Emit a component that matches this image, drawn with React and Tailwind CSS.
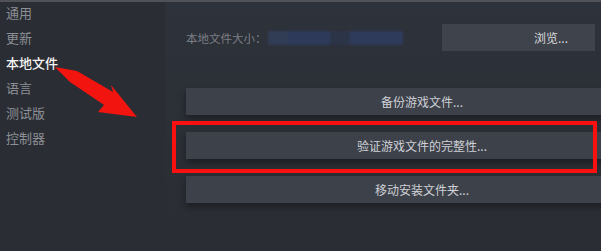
import React from "react";

const font = { fontFamily: '"Noto Sans CJK SC", "Noto Sans", sans-serif' };

const navItems = ["通用", "更新", "本地文件", "语言", "测试版", "控制器"];

function ActionButton({ children }) {
  return (
    <div className="w-[472px] h-[27px] shrink-0 bg-[#3d414a] flex items-center justify-center text-[12px] leading-none text-[#cfd1d6] shadow-[0_4px_7px_rgba(0,0,0,0.35)]">
      {children}
    </div>
  );
}

export default function App() {
  return (
    <div
      className="relative w-[601px] h-[251px] overflow-hidden bg-[#2a2d33] flex border-t-2 border-[#505257]"
      style={font}
    >
      <div className="w-[165px] shrink-0 flex flex-col bg-[#2a2d33] mt-[-2px]">
        {navItems.map((t, i) => (
          <div
            key={t}
            className={
              "h-[25px] leading-[25px] pl-[6px] text-[13px] " +
              (i === 2 ? "text-[#f4f4f4] font-medium" : "text-[#8c8f95]")
            }
          >
            {t}
          </div>
        ))}
      </div>

      <div className="flex-1 min-w-0 flex flex-col pl-[21px] pt-[22px] bg-gradient-to-b from-[#2e323a] via-[#2b2f36] to-[#2a2d33]">
        <div className="flex items-center h-[27px]">
          <div className="w-[82px] shrink-0 whitespace-nowrap text-[11.5px] leading-none text-[#7c7f86] pt-[3px]">
            本地文件大小：
          </div>
          <div className="w-[135px] h-[14px] shrink-0 flex blur-[1px] mt-[1px]">
            <div className="w-[20px] h-full bg-[#313c55]" />
            <div className="w-[42px] h-full bg-[#2d3a5a]" />
            <div className="w-[20px] h-full bg-[#2c3447]" />
            <div className="w-[53px] h-full bg-[#2e3b5a]" />
          </div>
          <div className="ml-[39px] w-[153px] h-[27px] shrink-0 bg-[#3f434b] flex items-center pl-[92px] text-[12px] leading-none text-[#d9dadd]">
            浏览...
          </div>
        </div>

        <div className="mt-[37px] flex flex-col gap-[17px]">
          <ActionButton>备份游戏文件...</ActionButton>
          <ActionButton>验证游戏文件的完整性...</ActionButton>
          <ActionButton>移动安装文件夹...</ActionButton>
        </div>
      </div>

      {/* red highlight annotation */}
      <div className="absolute left-[172px] top-[119px] w-[425px] h-[52px] border-[4px] border-[#fb1010] pointer-events-none" />

      {/* red arrow annotation */}
      <svg
        className="absolute left-0 top-[-2px] pointer-events-none"
        width="160"
        height="130"
        viewBox="0 0 160 130"
      >
        <polygon
          points="55,67 77,71 113,92 111,85 137,117 98,112 104,105 70,82"
          fill="#f2140f"
        />
      </svg>
    </div>
  );
}
